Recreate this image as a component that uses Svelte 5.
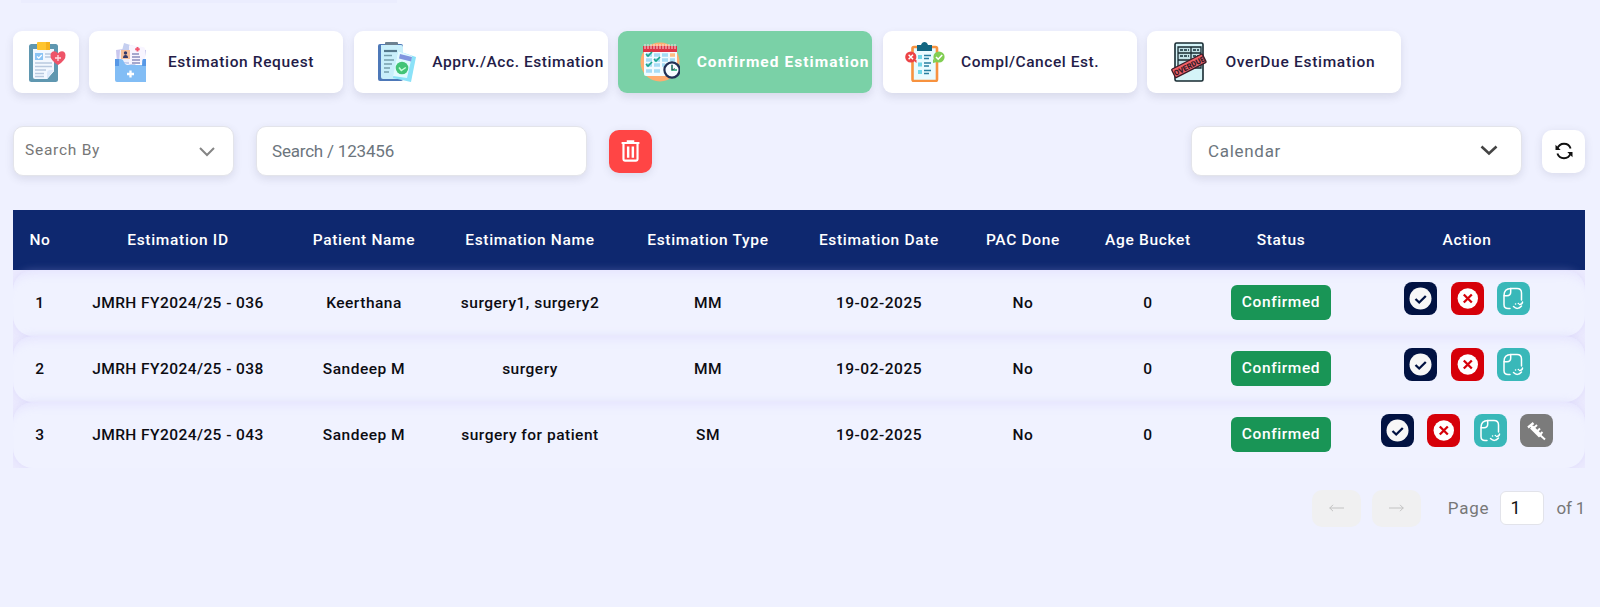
<script>
  const tabs = [
    { icon: 'folder', label: 'Estimation Request', ls: 0.62 },
    { icon: 'approved', label: 'Apprv./Acc. Estimation', ls: 0.57 },
    { icon: 'calendar', label: 'Confirmed Estimation', ls: 1.05, active: true },
    { icon: 'checklist', label: 'Compl/Cancel Est.', ls: 0.55 },
    { icon: 'overdue', label: 'OverDue Estimation', ls: 0.7 }
  ];
  const columns = ['No', 'Estimation ID', 'Patient Name', 'Estimation Name', 'Estimation Type', 'Estimation Date', 'PAC Done', 'Age Bucket', 'Status', 'Action'];
  const rows = [
    ['1', 'JMRH FY2024/25 - 036', 'Keerthana', 'surgery1, surgery2', 'MM', '19-02-2025', 'No', '0'],
    ['2', 'JMRH FY2024/25 - 038', 'Sandeep M', 'surgery', 'MM', '19-02-2025', 'No', '0'],
    ['3', 'JMRH FY2024/25 - 043', 'Sandeep M', 'surgery for patient', 'SM', '19-02-2025', 'No', '0']
  ];
  const actions = [
    ['ok', 'cancel', 'note'],
    ['ok', 'cancel', 'note'],
    ['ok', 'cancel', 'note', 'syringe']
  ];
</script>

{#snippet tabIcon(name)}
  <svg class="tab-icon" viewBox="0 0 40 40" width="40" height="40">
    {#if name === 'home'}
      <rect x="2" y="2" width="29" height="38" rx="2.5" fill="#5f97b0" />
      <path d="M6 7h21v22l-7 8H8q-2 0-2-2z" fill="#f3f8ff" />
      <path d="M27 28v1l-7 8v-6q0-3 3-3z" fill="#fff" />
      <path d="M20 37v-6q0-3 3-3h4z" fill="#dce9fb" />
      <rect x="10" y="0" width="13" height="8" rx="1" fill="#ffc52f" />
      <rect x="19" y="0" width="4" height="8" fill="#f5b21e" />
      <rect x="8" y="11" width="8" height="7" fill="#8cc4f5" />
      <path d="m10 14.5 1.8 1.7 3-3.2" fill="none" stroke="#fff" stroke-width="1.2" />
      <path d="M18 12h7M18 15h7M8 21h17M8 24.500h17M8 28h11M8 31.500h9M8 34.500h9" stroke="#b9c9df" stroke-width="1.5" />
      <path d="M31 23q-8-5-7.500-10 1-4.500 5-3.500 1.500.5 2.500 2 1-1.500 2.500-2 4.500-1 5 3.500Q39 18 31 23z" fill="#ee5468" />
      <path d="M31 13v6M28 16h6" stroke="#ffdde2" stroke-width="1.300" />
    {:else if name === 'folder'}
      <g transform="translate(1)">
        <path d="m12 1 16 5-5 18-16-4z" fill="#c5cff0" />
        <path d="m4 8 7-1 2 14-8 1zM27 7l7 1-2 14-6-1z" fill="#c9c7ee" />
        <path d="M17 4q0-1 1.500-1L31 5q2 0 2 2v15H17z" fill="#f8f5ff" />
        <path d="M8 8h9v12H7z" fill="#edf0fc" />
        <rect x="9" y="8" width="9" height="9" fill="#f4bf9c" />
        <circle cx="13.500" cy="11" r="1.700" fill="#31396b" />
        <path d="M11 16q0-3 2.500-3t2.500 3z" fill="#31396b" />
        <path d="M3 17h6q2 0 3 3t4 3h14V19q0-2 2-2h2v23H5q-2 0-2-2z" fill="#82bdf5" />
        <path d="M3 17h4v7H3zM31 17h3v7h-4z" fill="#5798e6" />
        <path d="M20 12h7M20 15h8M20 18h8M20 21h8" stroke="#535b9c" stroke-width="1.200" />
        <path d="M25.500 5v4.500M23.200 7.200h4.500" stroke="#f2556d" stroke-width="1.900" />
        <path d="M18.500 28.500v7M15 32h7" stroke="#fff" stroke-width="2.300" />
      </g>
    {:else if name === 'approved'}
      <rect x="2" y="2" width="25" height="37" rx="2" fill="#4d78b8" />
      <path d="M5 3h20q2 0 2 2v32H7q-2 0-2-2z" fill="#c9effb" />
      <rect x="9" y="0" width="13" height="3" rx="1" fill="#6c8191" />
      <path d="M8 9h13" stroke="#55798c" stroke-width="2.200" />
      <path d="M8 13.500h8M8 18h10M8 22h8M8 26h6M8 30h5" stroke="#769eac" stroke-width="1.300" />
      <path d="m22 9 18 6-5 25-18-4z" fill="#8be2f8" />
      <path d="m22 9 14 5-5 22-14-2z" fill="#e2faff" />
      <path d="m24 12 12 3-1 4.500-12-3z" fill="#8095df" />
      <circle cx="26" cy="26" r="6.300" fill="#43c477" />
      <path d="m23 25.500 2.300 3 4.500-3" fill="none" stroke="#c7ffda" stroke-width="1.500" />
    {:else if name === 'calendar'}
      <circle cx="20" cy="20" r="19.500" fill="#ffac70" />
      <rect x="4" y="8" width="33" height="26" rx="2" fill="#f2fbff" />
      <path d="M3 4h34v6H3z" fill="#dc3545" />
      <path d="M5 2v5m3-5v5m3-5v5m3-5v5m3-5v5m3-5v5m3-5v5m3-5v5m3-5v5m3-5v5m3-5v5" stroke="#f9dce0" />
      <path d="M6 13h6M14 13h6M22 13h6M6 18h6M14 18h6M22 18h6M30 18h5M6 23h6M14 23h6M22 23h3M6 29h6M14 29h6" stroke="#a5dcf5" stroke-width="3.500" />
      <path d="M30 13h5" stroke="#ffbd83" stroke-width="3.500" />
      <path d="m6 12 2 2 4-4M14 17l2 2 4-4M6 22l2 2 4-4" fill="none" stroke="#18a58b" stroke-width="1.700" />
      <circle cx="32" cy="28" r="7.600" fill="#f6fcff" stroke="#213055" stroke-width="2.200" />
      <path d="M32 23v5h5" fill="none" stroke="#51bf94" stroke-width="1.800" />
      <path d="M32 22.500v5.500l3-1.500" fill="none" stroke="#263454" stroke-width=".8" />
    {:else if name === 'checklist'}
      <rect x="7.500" y="5" width="24.500" height="34" rx="1.500" fill="#e9fbff" stroke="#f7923f" stroke-width="2.600" />
      <path d="M12 3h4q1-3 3.500-3T23 3h4v6H12z" fill="#126681" />
      <path d="M13 15h4M13 22.500h4M13 30h4" stroke="#6fd6e8" stroke-width="4" />
      <path d="M19 13.500h7M19 16.500h5M19 21h7M19 24h5M19 28.500h7M19 31.500h5" stroke="#277fa0" stroke-width="1.400" />
      <circle cx="5.800" cy="15" r="5.600" fill="#ec4346" /><path d="M8 18h3.500v3z" fill="#ec4346" />
      <path d="m3.600 12.800 4.400 4.400m0-4.400-4.400 4.400" stroke="#fff" stroke-width="1.500" />
      <circle cx="34" cy="15" r="5.600" fill="#81ce53" /><path d="M28 17v4l4-1z" fill="#81ce53" />
      <path d="m31 15 2.200 2.200 4-4.200" fill="none" stroke="#fff" stroke-width="1.600" />
    {:else}
      <rect x="6" y="1" width="28" height="38" rx="1.500" fill="#d5f4f8" stroke="#172a31" stroke-width="1.600" />
      <path d="M9 5h23v21H9zM22 5v21M9 11h23M9 18h23" fill="#c2e0e5" stroke="#172a31" stroke-width="1.300" />
      <path d="M11 8h9M24 8h6M11 14h9M24 14h6" stroke="#3b5760" stroke-width="1.800" stroke-dasharray="3 1" />
      <g transform="rotate(-27 20 23.500)">
        <rect x="2.500" y="19" width="34.500" height="9.500" rx="1" fill="#ef6068" stroke="#391c27" stroke-width="1.300" />
        <text x="20" y="26.800" text-anchor="middle" class="stamp">OVERDUE</text>
      </g>
    {/if}
  </svg>
{/snippet}

{#snippet actionIcon(name)}
  <span class="action {name}">
    <svg viewBox="0 0 33 33" width="33" height="33">
      {#if name === 'ok'}
        <circle cx="16.500" cy="16.500" r="11" fill="#f7f7f7" />
        <path d="m11.500 17 3.700 3.500 6.600-6.500" fill="none" stroke="#011242" stroke-width="2.300" />
      {:else if name === 'cancel'}
        <circle cx="16.800" cy="16.500" r="10.200" fill="#fff" />
        <path d="m12.800 12.500 8 8m0-8-8 8" stroke="#d60009" stroke-width="2.300" />
      {:else if name === 'note'}
        <g fill="none" stroke="#fff" stroke-width="1.500" stroke-linecap="round" stroke-linejoin="round">
          <path d="M13 26.500H11q-4 0-4-4V13.500q0-7 7-7h6q4.500 0 4.500 4.500v7" />
          <path d="M7.300 13.800H10q3.700 0 3.700-3.700V6.500" />
          <path d="M16.500 24.500q4 4 8-.5m-2-1.500q3-.3 3-2.500" />
          <path d="M18.500 22h.1M21.300 21.500h.1" />
        </g>
      {:else}
        <g fill="none" stroke="#fff">
          <path d="m8 13.500 5.500-4.500M10 10.500l3 3.500" stroke-width="2.300" />
          <path d="m11.500 13 9 9" stroke-width="4.200" />
          <path d="M12 15.500 17 11M15.500 19l4.500-4.500M18.500 22l4-4" stroke-width="2" />
          <path d="m20 21 5 4.500" stroke-width="2" />
        </g>
      {/if}
    </svg>
  </span>
{/snippet}

<div class="page">
  <div class="edge"></div>

  <nav class="tabs">
    <button class="tab home" aria-label="Estimations">{@render tabIcon('home')}</button>
    {#each tabs as t}
      <button class="tab" class:active={t.active}>
        {@render tabIcon(t.icon)}
        <span style:letter-spacing="{t.ls}px">{t.label}</span>
      </button>
    {/each}
  </nav>

  <div class="filters">
    <div class="field by">
      <span>Search By</span>
      <svg width="16" height="12" viewBox="0 0 16 12"><path d="m1 3 7 7 7-7" fill="none" stroke="#858585" stroke-width="2" /></svg>
    </div>
    <div class="field search"><span>Search / 123456</span></div>
    <button class="square trash" aria-label="Clear">
      <svg width="19" height="22.500" viewBox="0 0 20 24" fill="none" stroke="#fff">
        <path d="M.500 3.200h19M6 1.300h8" stroke-width="2" />
        <path d="M2.500 4v16.500q0 1.500 1.500 1.500h12q1.500 0 1.500-1.500V4" stroke-width="2.300" />
        <path d="M7.500 7v12M12.500 7v12" stroke-width="2.600" />
      </svg>
    </button>
    <div class="field cal">
      <span>Calendar</span>
      <svg width="18" height="11" viewBox="0 0 18 11"><path d="m1.500 1.500 7.500 7 7.500-7" fill="none" stroke="#444" stroke-width="2.600" /></svg>
    </div>
    <button class="square refresh" aria-label="Refresh">
      <svg width="18" height="18" viewBox="0 0 18 18" fill="none" stroke="#111" stroke-width="1.900">
        <path d="M2.200 7Q4 1.800 9 1.800q5 0 6.600 4.700M15.800 11Q14 16.200 9 16.200q-5 0-6.600-4.700" />
        <path d="M.5 2.800v5.200h5.200zM17.500 15.200V10h-5.200z" fill="#111" stroke="none" />
      </svg>
    </button>
  </div>

  <div class="table">
    <div class="row head">
      {#each columns as c}<div>{c}</div>{/each}
    </div>
    {#each rows as r, i}
      <div class="row body">
        {#each r as cell, c}<div class:code={c === 1}>{cell}</div>{/each}
        <div><span class="badge">Confirmed</span></div>
        <div class="actions">{#each actions[i] as a}{@render actionIcon(a)}{/each}</div>
      </div>
    {/each}
  </div>

  <div class="pager">
    <button class="arrow" disabled aria-label="Previous page"><svg width="15" height="8" viewBox="0 0 15 8"><path d="M.500 4H15M4 .800.800 4 4 7.200" /></svg></button>
    <button class="arrow" disabled aria-label="Next page"><svg width="15" height="8" viewBox="0 0 15 8"><path d="M0 4h14.500M11 .800 14.200 4 11 7.200" /></svg></button>
    <span class="word">Page</span>
    <span class="num">1</span>
    <span class="of">of 1</span>
  </div>
</div>

<style>
  :global(body) { margin: 0; background: #eff1ff; }
  .page {
    box-sizing: border-box;
    height: 607px;
    overflow: hidden;
    padding: 0 15px 0 13px;
    background: #eff1ff;
    font-family: Roboto, sans-serif;
    font-size: 15.500px;
    font-weight: 500;
    color: #0c0c12;
  }
  button { border: 0; padding: 0; font: inherit; color: inherit; }
  .edge { width: 376px; height: 3px; margin-left: 8px; background: #ebedfe; }
  .tabs { display: flex; gap: 10.400px; padding-top: 28px; }
  .tab {
    box-sizing: border-box;
    display: flex;
    align-items: center;
    flex: 0 0 254px;
    height: 61.500px;
    padding-left: 22px;
    gap: 16.500px;
    border-radius: 9px;
    background: #fff;
    color: #241c48;
    white-space: nowrap;
    box-shadow: 0 4px 8px rgba(60, 60, 90, .13);
  }
  .tab.home { flex-basis: 66px; padding-left: 14px; }
  .tab-icon { flex: none; }
  .tab.active { background: #7ad1a7; color: #fff; font-weight: 700; }
  .stamp { font: 900 7.600px Roboto, sans-serif; fill: #391c27; }

  .filters { display: flex; align-items: center; height: 50px; margin-top: 33.500px; }
  .field {
    box-sizing: border-box;
    display: flex;
    align-items: center;
    justify-content: space-between;
    height: 50px;
    border: 1px solid #e3e4ea;
    border-radius: 10px;
    background: #fff;
    box-shadow: 0 3px 8px rgba(60, 60, 90, .12);
  }
  .by { width: 221px; padding: 0 18px 0 11px; color: #777; font-weight: 400; letter-spacing: .75px; }
  .by span { padding-bottom: 2px; }
  .search { width: 331px; margin-left: 22px; padding-left: 15px; color: #6c757d; font-size: 17px; font-weight: 400; letter-spacing: -.2px; }
  .cal { width: 331px; margin-left: auto; padding: 0 23px 0 16px; color: #6c757d; font-size: 17px; font-weight: 400; letter-spacing: .7px; }
  .cal svg { padding-bottom: 2px; }
  .square {
    display: flex;
    align-items: center;
    justify-content: center;
    width: 43px;
    height: 43px;
    border-radius: 10px;
    background: #fff;
    box-shadow: 0 2px 8px rgba(60, 60, 90, .13);
  }
  .trash { margin-left: 22px; background: #ff4545; }
  .refresh { margin-left: 20px; }

  .table { margin-top: 33.500px; width: 1572px; overflow: hidden; background: #ecebfe; }
  .row {
    display: grid;
    grid-template-columns: 54px 222px 150px 182px 174px 168px 120px 130px 136px 236px;
    align-items: center;
    text-align: center;
    white-space: nowrap;
    letter-spacing: .5px;
  }
  .head { height: 60px; background: #0e286f; color: #fff; letter-spacing: .68px; }
  .body {
    position: relative;
    height: 66px;
    border-radius: 20px;
    background: #f0f2ff;
    box-shadow: 0 0 9px rgba(188, 180, 240, .28), inset 0 12px 10px -9px rgba(200, 190, 250, .28);
  }
  .code { letter-spacing: .43px; }
  .badge {
    display: inline-block;
    width: 100px;
    height: 35px;
    line-height: 35px;
    border-radius: 6px;
    background: #199556;
    color: #fff;
    letter-spacing: .6px;
  }
  .actions { display: flex; justify-content: center; gap: 13.500px; padding-bottom: 8px; }
  .action { width: 33px; height: 33px; border-radius: 8px; }
  .action svg { display: block; }
  .ok { background: #011242; }
  .cancel { background: #d60009; }
  .note { background: #39b8b9; }
  .syringe { background: #7b7b7b; }

  .pager { display: flex; justify-content: flex-end; align-items: center; height: 37px; margin-top: 22px; color: #777; font-size: 17px; font-weight: 400; letter-spacing: .8px; }
  .arrow { display: flex; align-items: center; justify-content: center; width: 49px; height: 37px; margin-right: 11px; border-radius: 10px; background: #f0f0f1; }
  .arrow path { fill: none; stroke: #c2c2c2; stroke-width: 1; }
  .word { margin-left: 16px; }
  .num { box-sizing: border-box; width: 44px; height: 34px; margin: 0 12px 0 11px; padding-left: 9px; line-height: 32px; border: 1px solid #e2e3ea; border-radius: 6px; background: #fff; color: #111; font-size: 18px; }
  .of { letter-spacing: -.2px; }
</style>
